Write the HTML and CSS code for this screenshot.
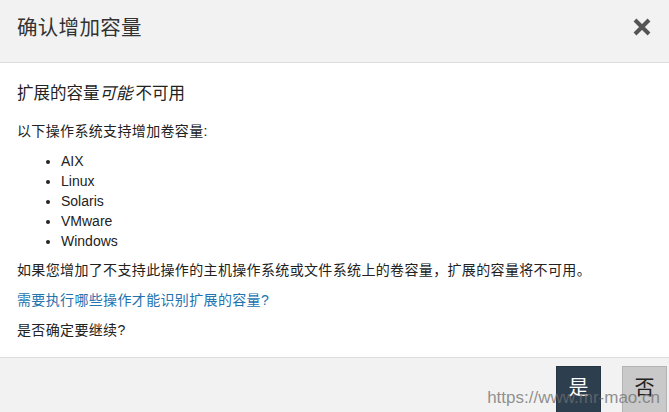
FILE: index.html
```html
<!DOCTYPE html>
<html lang="zh-CN">
<head>
  <meta charset="UTF-8">
  <meta name="viewport" content="width=device-width, initial-scale=1.0">
  <title>确认增加容量</title>
  <link rel="stylesheet" href="styles.css">
</head>
<body>

  <div class="dialog">
    <div class="dialog-header">
      <h1 class="dialog-title">确认增加容量</h1>
      <button class="close-btn" aria-label="关闭">
        <svg width="20" height="20" viewBox="0 0 20 20">
          <path d="M3 3 L17 17 M17 3 L3 17" stroke="#555" stroke-width="4" stroke-linecap="butt"/>
        </svg>
      </button>
    </div>

    <div class="dialog-body">
      <h2 class="warn">扩展的容量<em>可能</em>不可用</h2>
      <p>以下操作系统支持增加卷容量:</p>
      <ul class="os-list">
        <li>AIX</li>
        <li>Linux</li>
        <li>Solaris</li>
        <li>VMware</li>
        <li>Windows</li>
      </ul>
      <p>如果您增加了不支持此操作的主机操作系统或文件系统上的卷容量，扩展的容量将不可用。</p>
      <p><a href="#" class="help-link">需要执行哪些操作才能识别扩展的容量?</a></p>
      <p>是否确定要继续?</p>
    </div>

    <div class="dialog-footer">
      <button class="btn btn-primary">是</button>
      <button class="btn btn-default">否</button>
    </div>
  </div>

  <!-- 水印 -->
  <div class="watermark">https://www.mr-mao.cn</div>

</body>
</html>
```

FILE: styles.css
```css
* {
  margin: 0;
  padding: 0;
  box-sizing: border-box;
}
html, body {
  width: 100%;
  height: 100%;
  background-color: #fff;
  font-family: 'Liberation Sans', 'Noto Sans CJK SC', sans-serif;
  color: #222;
  font-size: 14px;
  overflow: hidden;
}
body {
  position: relative;
}
.dialog {
  display: flex;
  flex-direction: column;
  height: 100%;
}
.dialog-header {
  display: flex;
  align-items: flex-start;
  justify-content: space-between;
  background-color: #f2f2f2;
  border-bottom: 1px solid #dcdcdc;
  padding: 14px 17px 20px 17px;
  height: 63px;
}
.dialog-title {
  font-size: 20.5px;
  font-weight: normal;
  line-height: 28px;
  color: #333;
  letter-spacing: 0.3px;
}
.close-btn {
  background: none;
  border: none;
  cursor: pointer;
  margin-top: 3px;
}
.close-btn svg {
  display: block;
}
.dialog-body {
  padding: 18px 17px 17px 17px;
  line-height: 20px;
}
.warn {
  font-size: 16.5px;
  font-weight: normal;
  line-height: 24px;
  color: #222;
  margin-bottom: 16px;
}
.warn em {
  font-style: italic;
  margin: 0 3px 0 0;
}
.dialog-body p {
  margin-bottom: 10px;
  letter-spacing: 0.35px;
}
.dialog-body p:last-child {
  margin-bottom: 0;
}
.os-list {
  padding-left: 44px;
  margin: 0 0 9px 0;
}
.help-link {
  color: #2274b0;
  text-decoration: none;
}
.dialog-footer {
  flex: 1;
  display: flex;
  justify-content: flex-end;
  gap: 21px;
  background-color: #f2f2f2;
  border-top: 1px solid #dcdcdc;
  padding: 8px 2px 0 0;
}
.btn {
  width: 45px;
  height: 48px;
  font-size: 20px;
  font-family: 'Noto Sans CJK SC', sans-serif;
  cursor: pointer;
  padding-bottom: 8px;
}
.btn-primary {
  background-color: #2d3e4f;
  border: 1px solid #263544;
  color: #fff;
}
.btn-default {
  background-color: #c9c9c9;
  border: 1px solid #b3b3b3;
  color: #222;
}

/* 水印 */
.watermark {
  position: absolute;
  right: 9px;
  bottom: 4px;
  font-size: 17px;
  color: rgba(110, 110, 110, 0.75);
  pointer-events: none;
}
```
